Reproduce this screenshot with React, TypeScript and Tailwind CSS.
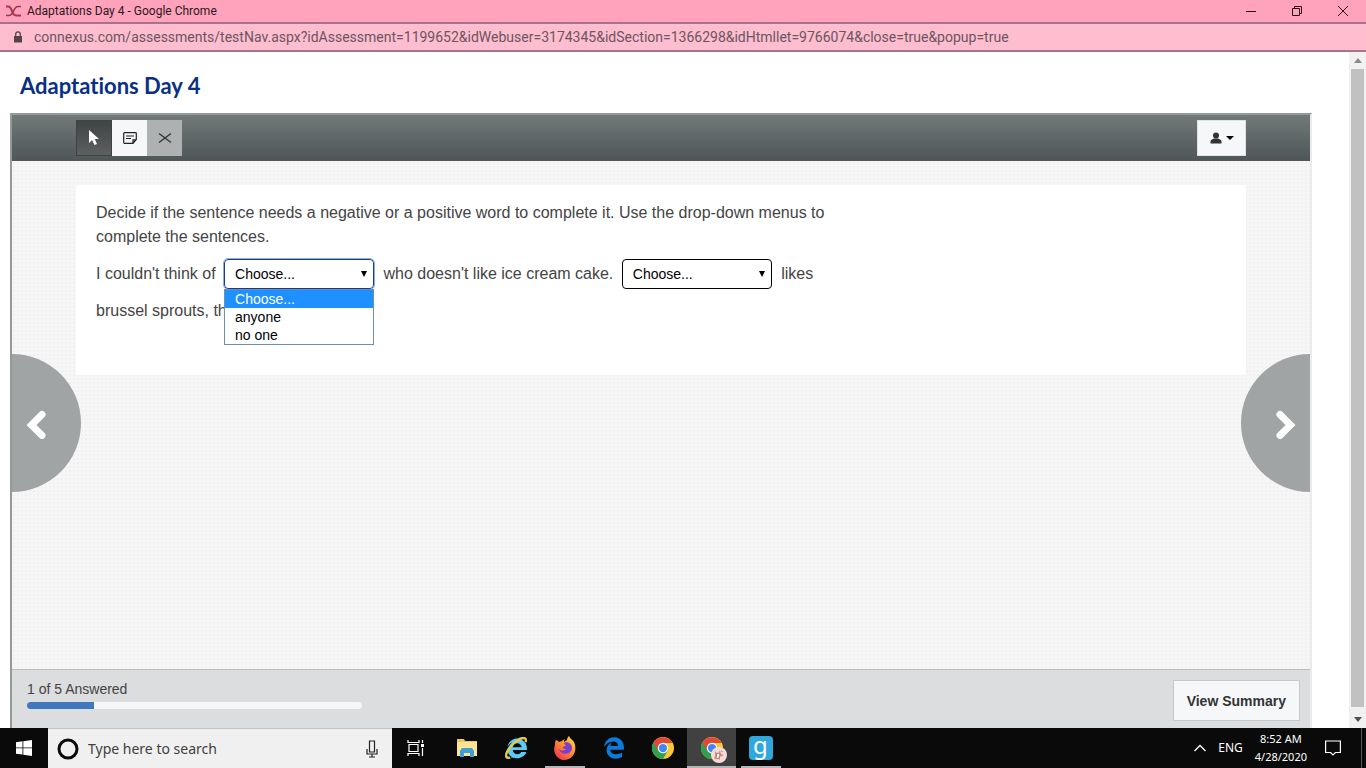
import { useState } from "react";
import { FaEdgeLegacy, FaInternetExplorer } from "react-icons/fa";

const address =
  "connexus.com/assessments/testNav.aspx?idAssessment=1199652&idWebuser=3174345&idSection=1366298&idHtmllet=9766074&close=true&popup=true";

const choices: string[] = ["Choose...", "anyone", "no one"];

const TitleBar = () => (
  <header className="font-['Roboto',sans-serif]">
    <div className="flex h-6 items-center justify-between border-b-2 border-[#a8738a] bg-[#ffa3bd] pl-1.5">
      <div className="flex items-center gap-[5px]">
        <svg className="h-3 w-4" viewBox="0 0 16 12" fill="none" stroke="#b5304a" strokeWidth="2">
          <path d="M0 1.5h2c5 0 3 9 8 9h5" />
          <path d="M15 1.5h-3c-5 0-4 9-9 9H0" stroke="#8f3a50" strokeWidth="1.5" />
        </svg>
        <span className="text-xs text-[#2b1820]">Adaptations Day 4 - Google Chrome</span>
      </div>
      <div className="flex">
        <button aria-label="Minimize" className="flex h-5 w-[46px] items-center justify-center">
          <svg className="h-3 w-3" viewBox="0 0 12 12" stroke="#2b1018"><path d="M1 6.5h10" /></svg>
        </button>
        <button aria-label="Restore" className="flex h-5 w-[46px] items-center justify-center">
          <svg className="h-3 w-3" viewBox="0 0 12 12" fill="none" stroke="#2b1018">
            <path d="M1.500 3.500h7v7h-7zM3.500 3.500v-2h7v7h-2" />
          </svg>
        </button>
        <button aria-label="Close" className="flex h-5 w-[46px] items-center justify-center">
          <svg className="h-3 w-3" viewBox="0 0 12 12" stroke="#2b1018"><path d="M1 1l10 10M11 1L1 11" /></svg>
        </button>
      </div>
    </div>
    <div className="flex h-7 items-center gap-3 border-b-2 border-[#a8738a] bg-[#ffbdd0] pl-3.5">
      <svg className="h-3 w-2" viewBox="0 0 8 12">
        <path d="M0 5h8v6.500H0z" fill="#55444b" />
        <path d="M1.700 5V3.200a2.300 2.300 0 0 1 4.600 0V5" fill="none" stroke="#55444b" strokeWidth="1.300" />
      </svg>
      <span className="text-sm whitespace-nowrap text-[#6b5560]">{address}</span>
    </div>
  </header>
);

type AnswerSelectProps = {
  label: string;
  open?: boolean;
};

const AnswerSelect = ({ label, open = false }: AnswerSelectProps) => {
  const [value, setValue] = useState<string>(choices[0]);

  return (
    <span className="relative mr-[5px] ml-1 inline-block h-[30px] w-[150px] align-baseline text-sm leading-[18px] text-black">
      <select
        aria-label={label}
        value={value}
        onChange={(e) => setValue(e.target.value)}
        className={
          open
            ? "block h-full w-full appearance-none rounded-sm border border-[#1d3a8a] bg-white px-2.5 outline-1 outline-[#8fb0e0]"
            : "block h-full w-full appearance-none rounded-sm border border-black bg-white px-2.5"
        }
      >
        {choices.map((choice) => (
          <option key={choice}>{choice}</option>
        ))}
      </select>
      <svg className="pointer-events-none absolute top-3 right-1.5 h-1.5 w-2" viewBox="0 0 8 6">
        <path d="M1 0h6L4 6z" />
      </svg>
      {open && (
        <ul role="listbox" aria-label={label} className="absolute top-full left-0 z-10 w-full border border-[#6c90b4] bg-white">
          {choices.map((choice) => (
            <li
              key={choice}
              role="option"
              aria-selected={choice === value}
              onClick={() => setValue(choice)}
              className={choice === value ? "bg-[#1e90ff] px-2.5 text-white" : "px-2.5"}
            >
              {choice}
            </li>
          ))}
        </ul>
      )}
    </span>
  );
};

const Toolbar = () => (
  <div className="flex h-[46px] items-center justify-between bg-linear-to-b from-[#727979] to-[#4f5657] px-16">
    <div className="flex">
      <button aria-label="Pointer" className="flex h-9 w-9 items-center justify-center border border-[#3f4242] bg-linear-to-b from-[#414444] to-[#5d6060]">
        <svg className="h-4 w-3" viewBox="0 0 12 16" fill="#fff"><path d="M1 0v13l3-3 2.500 5 2.500-1-2.200-5H11z" /></svg>
      </button>
      <button aria-label="Notes" className="flex h-9 w-[35px] items-center justify-center bg-[#f5f7f9]">
        <svg className="h-3.5 w-3.5" viewBox="0 0 14 14" fill="none" stroke="#222" strokeWidth="1.200">
          <path d="M1.500 1.700h11a.8.8 0 0 1 .8.8v6L10 12.300H1.500a.8.8 0 0 1-.8-.8v-9a.8.8 0 0 1 .8-.8zM13 8.800H10v3.200M3 5h8M3 7.500h5" />
        </svg>
      </button>
      <button aria-label="Eliminate choice" className="flex h-9 w-[35px] items-center justify-center bg-[#aeb1b2]">
        <svg className="h-3 w-3.5" viewBox="0 0 14 12" stroke="#333" strokeWidth="1.400"><path d="M1 1.500l12 9M13 1.500l-12 9" /></svg>
      </button>
    </div>
    <button aria-label="User menu" className="flex h-9 w-[49px] items-center justify-center gap-1 border border-[#dfe2e4] bg-[#f5f7f9]">
      <svg className="h-3 w-3" viewBox="0 0 12 12" fill="#333">
        <circle cx="6" cy="3.500" r="3" />
        <path d="M.5 11.500v-2C.5 7.500 3 7 4 6.500h4c1 .5 3.500 1 3.500 3v2z" />
      </svg>
      <svg className="h-1 w-2" viewBox="0 0 8 4"><path d="M0 0h8L4 4z" /></svg>
    </button>
  </div>
);

const Question = () => (
  <main className="flex-1 bg-[#f6f6f6] bg-[radial-gradient(#f1f1f1_1px,transparent_1px)] bg-size-[4px_4px] pt-6">
    <section className="mx-16 rounded-xs bg-white px-5 pt-4 pb-[46px] text-[#444]">
      <div className="max-w-[750px]">
        <p className="mb-[6px] leading-6">
          Decide if the sentence needs a negative or a positive word to complete it. Use the drop-down menus to
          complete the sentences.
        </p>
        <p className="leading-[37px]">
          <span>I couldn't think of</span> <AnswerSelect label="First missing word" open />{" "}
          <span>who doesn't like ice cream cake.</span> <AnswerSelect label="Second missing word" />{" "}
          <span>likes</span> <span>brussel sprouts, th</span>
        </p>
      </div>
    </section>
  </main>
);

const Footer = () => (
  <footer className="flex h-[59px] items-start justify-between border-t border-[#b9bbbc] bg-[#dcdddf] pr-2.5 pl-[15px]">
    <div className="pt-[9px]">
      <p className="text-sm text-[#444]">1 of 5 Answered</p>
      <div
        role="progressbar"
        aria-label="Questions answered"
        aria-valuenow={1}
        aria-valuemax={5}
        className="mt-[3px] h-[7px] w-[335px] overflow-hidden rounded-sm bg-[#f5f6f7]"
      >
        <div className="h-full w-1/5 bg-[#4077bd]" />
      </div>
    </div>
    <button className="mt-2.5 h-[41px] border border-[#c6c9cb] bg-[#f5f7f9] px-[13px] text-sm font-bold text-[#333]">
      View Summary
    </button>
  </footer>
);

const Scrollbar = () => (
  <div className="flex w-[17px] flex-col items-center justify-between bg-[#f1f1f1]">
    <svg className="mt-1.5 h-[5px] w-2" viewBox="0 0 8 5" fill="#8b8b8b"><path d="M0 5h8L4 0z" /></svg>
    <div className="my-1.5 w-[13px] flex-1 bg-[#c1c1c1]" />
    <svg className="mt-1 mb-1.5 h-[5px] w-2" viewBox="0 0 8 5" fill="#505050"><path d="M0 0h8L4 5z" /></svg>
  </div>
);

const ChromeIcon = () => (
  <svg className="h-[22px] w-[22px]" viewBox="0 0 24 24">
    <circle cx="12" cy="12" r="12" fill="#fcc934" />
    <path d="M12 12L1.600 6A12 12 0 0 0 12 24l5.200-9z" fill="#30a04f" />
    <path d="M1.600 6a12 12 0 0 1 20.800 0.500H12L6.800 15z" fill="#e0483a" />
    <circle cx="12" cy="12" r="5.700" fill="#fff" />
    <circle cx="12" cy="12" r="4.500" fill="#4285f4" />
  </svg>
);

const FirefoxIcon = () => (
  <svg className="h-6 w-6" viewBox="0 0 24 24">
    <defs>
      <linearGradient id="fire" x1="1" y1="0" x2="0.200" y2="1">
        <stop offset="0" stopColor="#ffe64a" />
        <stop offset="0.450" stopColor="#ff9a2c" />
        <stop offset="1" stopColor="#f2304e" />
      </linearGradient>
    </defs>
    <path d="M3 4c1 0 2 1 3 2l3-1c1-1 2-2 3-2-1 1-1 2-1 3l3-2c0-2 1-3 2-4 1 3 3 3 5 6 4 8-1 18-10 18C4 24-1 16 2 9c0-2 0-4 1-5z" fill="url(#fire)" />
    <path d="M11 7c4-2 8 1 8 5 0 5-6 7-10 5-2-1-3-3-3-4 2 2 5 2 7 0-2 0-4-1-3-2 1-1 3-1 3-2-1 0-2-1-2-2z" fill="#7b3fd0" />
  </svg>
);

const ExplorerIcon = () => (
  <svg className="h-5 w-[22px]" viewBox="0 0 22 20">
    <path d="M1 1h7l1 2h12v15H1z" fill="#f0c75e" />
    <path d="M1 4h20v14H1z" fill="#ffe394" />
    <path d="M4 19v-6l2-3h10l2 3v6h-4v-4H8v4z" fill="#3c9fd6" />
  </svg>
);

const Taskbar = () => (
  <nav className="flex h-10 shrink-0 bg-[#0a0a0a] font-['Noto_Sans',sans-serif] text-white">
    <button aria-label="Start" className="flex w-12 items-center justify-center">
      <svg className="h-4 w-4" viewBox="0 0 16 16" fill="#fff">
        <path d="M0 2.200L6.500 1.300v6.200H0zM7.300 1.200L16 0v7.500H7.300zM0 8.300h6.500v6.300L0 13.700zM7.300 8.300H16V16l-8.700-1.200z" />
      </svg>
    </button>
    <div className="flex w-[344px] items-center border-t border-[#c4c4c4] bg-[#f0f0f0] pr-3.5 pl-[9px]">
      <svg className="h-[22px] w-[22px]" viewBox="0 0 22 22" fill="none" stroke="#0a0a0a" strokeWidth="3">
        <circle cx="11" cy="11" r="9" />
      </svg>
      <input
        aria-label="Search"
        placeholder="Type here to search"
        className="ml-[9px] min-w-0 flex-1 bg-transparent text-sm text-black outline-none placeholder:text-[#404040]"
      />
      <svg className="h-[18px] w-3" viewBox="0 0 12 18" fill="none" stroke="#222" strokeWidth="1.200">
        <path d="M3.500 1h5v11h-5zM1 9v5h10V9M6 14v3M3 17h6" />
      </svg>
    </div>
    <button aria-label="Task view" className="mr-0.5 flex w-12 items-center justify-center">
      <svg className="h-4 w-[18px]" viewBox="0 0 18 16" fill="none" stroke="#fff" strokeWidth="1.200">
        <path d="M2 4.500h9v7H2zM1 0v2.500h11V0M1 16v-2.500h11V16M15.500 0v3M15.500 8v8" />
        <path d="M14 4h3v3h-3z" fill="#fff" stroke="none" />
      </svg>
    </button>
    <button aria-label="File Explorer" className="flex w-[49px] items-center justify-center">
      <ExplorerIcon />
    </button>
    <button aria-label="Internet Explorer" className="flex w-[49px] items-center justify-center">
      <span className="relative">
        <FaInternetExplorer className="h-[22px] w-[22px] text-[#5ecdf5]" />
        <svg className="absolute inset-0 h-[22px] w-[22px]" viewBox="0 0 22 22" fill="none" stroke="#f5c83a" strokeWidth="2.200">
          <path d="M5 20.500c-4 1-5-2-2.500-6C5 9 12 2.500 17.500 1.200c3-.7 4 1.300 3 4" />
        </svg>
      </span>
    </button>
    <button aria-label="Firefox" className="flex w-[49px] flex-col items-center justify-between pt-2">
      <FirefoxIcon />
      <span className="h-0.5 w-10 bg-[#b5b5b5]" />
    </button>
    <button aria-label="Edge" className="flex w-[49px] items-center justify-center">
      <FaEdgeLegacy className="h-[22px] w-[22px] text-[#0b7bdc]" />
    </button>
    <button aria-label="Chrome" className="flex w-[49px] items-center justify-center">
      <ChromeIcon />
    </button>
    <button aria-label="Chrome, Adaptations Day 4" className="flex w-[49px] flex-col items-center justify-between bg-[#414141] pt-[9px]">
      <span className="relative">
        <ChromeIcon />
        <svg className="absolute top-2.5 left-2.5 h-4 w-4" viewBox="0 0 16 16">
          <circle cx="8" cy="8" r="8" fill="#f6dcd7" />
          <path d="M4 4l3 3 2-4 1 4 3 1-4 2v3l-3-2-3 1 1-3z" fill="#dc8d88" />
          <path d="M6 6l3 1-1 4-3 1zM10 4l2 1" fill="#fff" stroke="#8d4b48" strokeWidth=".6" />
        </svg>
      </span>
      <span className="h-0.5 w-full bg-[#b5b5b5]" />
    </button>
    <button aria-label="Goodreads" className="flex w-[49px] flex-col items-center justify-between pt-2">
      <span className="h-6 w-6 rounded-sm bg-[#31a8dc] text-center text-2xl leading-[17px]">g</span>
      <span className="h-0.5 w-10 bg-[#b5b5b5]" />
    </button>
    <div className="ml-auto flex items-center">
      <svg className="mr-3 h-2 w-3" viewBox="0 0 12 8" fill="none" stroke="#fff" strokeWidth="1.300"><path d="M.5 7L6 1.500 11.500 7" /></svg>
      <span className="mr-3 text-xs">ENG</span>
      <div className="mr-[18px] text-center text-[11px] leading-[18px]">
        <p>8:52 AM</p>
        <p>4/28/2020</p>
      </div>
      <svg className="mr-5 h-4 w-4" viewBox="0 0 16 16" fill="none" stroke="#fff" strokeWidth="1.200">
        <path d="M.6 1h14.800v11.500h-5L8 15l-2.400-2.500h-5z" />
      </svg>
      <span className="h-10 w-[5px] border-l border-[#555]" />
    </div>
  </nav>
);

const App = () => (
  <div className="flex h-screen flex-col overflow-hidden bg-white font-['Liberation_Sans',Arial,sans-serif]">
    <TitleBar />
    <div className="flex min-h-0 flex-1">
      <div className="flex min-w-0 flex-1 flex-col pr-[37px] pl-2.5">
        <h1 className="px-2.5 pt-[18px] pb-[11px] font-['Lato',sans-serif] text-[22px] leading-8 font-bold text-[#0a2f87] [font-variant-ligatures:none]">
          Adaptations Day 4
        </h1>
        <div className="relative flex flex-1 flex-col border-t-2 border-r-2 border-l-2 border-t-[#959b99] border-r-[#ebebeb] border-l-[#959999]">
          <Toolbar />
          <Question />
          <Footer />
          <button aria-label="Previous question" className="absolute top-[239px] left-0 flex h-[138px] w-[69px] items-center rounded-r-full bg-[#a0a4a4] pl-[13px]">
            <svg className="h-8 w-6" viewBox="0 0 24 32" fill="none" stroke="#fff" strokeWidth="7" strokeLinecap="round">
              <path d="M17 7.500L6.500 18 17 28.500" />
            </svg>
          </button>
          <button aria-label="Next question" className="absolute top-[239px] right-0 flex h-[138px] w-[69px] items-center justify-end rounded-l-full bg-[#a0a4a4] pr-[13px]">
            <svg className="h-8 w-6" viewBox="0 0 24 32" fill="none" stroke="#fff" strokeWidth="7" strokeLinecap="round">
              <path d="M7 7.500L17.500 18 7 28.500" />
            </svg>
          </button>
        </div>
      </div>
      <Scrollbar />
    </div>
    <Taskbar />
  </div>
);

export default App;
